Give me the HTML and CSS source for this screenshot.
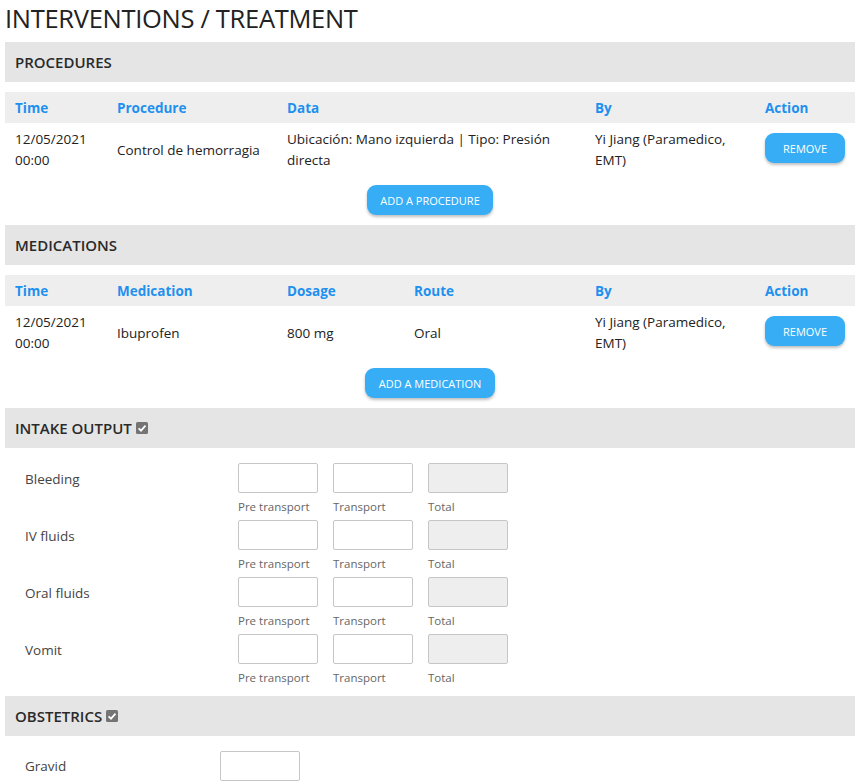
FILE: index.html
```html
<!DOCTYPE html>
<html>
<head>
<meta charset="utf-8">
<link rel="stylesheet" href="styles.css">
</head>
<body>
<h1 class="title">INTERVENTIONS / TREATMENT</h1>

<div class="sec-head">PROCEDURES</div>
<table class="tbl">
  <colgroup><col class="c102"><col class="c170"><col class="c308"><col class="c170"><col class="c100"></colgroup>
  <thead><tr><th>Time</th><th>Procedure</th><th>Data</th><th>By</th><th>Action</th></tr></thead>
  <tbody><tr>
    <td>12/05/2021<br>00:00</td>
    <td>Control de hemorragia</td>
    <td>Ubicación: Mano izquierda | Tipo: Presión directa</td>
    <td>Yi Jiang (Paramedico, EMT)</td>
    <td><button class="btn btn-rm">REMOVE</button></td>
  </tr></tbody>
</table>
<div class="add-row"><button class="btn btn-add">ADD A PROCEDURE</button></div>

<div class="sec-head">MEDICATIONS</div>
<table class="tbl">
  <colgroup><col class="c102"><col class="c170"><col class="c127"><col class="c181"><col class="c170"><col class="c100"></colgroup>
  <thead><tr><th>Time</th><th>Medication</th><th>Dosage</th><th>Route</th><th>By</th><th>Action</th></tr></thead>
  <tbody><tr>
    <td>12/05/2021<br>00:00</td>
    <td>Ibuprofen</td>
    <td>800 mg</td>
    <td>Oral</td>
    <td>Yi Jiang (Paramedico, EMT)</td>
    <td><button class="btn btn-rm">REMOVE</button></td>
  </tr></tbody>
</table>
<div class="add-row"><button class="btn btn-add btn-add-med">ADD A MEDICATION</button></div>

<div class="sec-head">INTAKE OUTPUT <span class="chk"><svg viewBox="0 0 12 12" width="12" height="12"><rect width="12" height="12" rx="1.5" fill="#747474"/><path d="M2.6 6.3 L5 8.6 L9.5 3.6" stroke="#fff" stroke-width="1.8" fill="none"/></svg></span></div>
<div class="io">
  <div class="io-row">
    <div class="io-label">Bleeding</div>
    <div class="io-field"><input class="inp" type="text"><span class="cap">Pre transport</span></div>
    <div class="io-field"><input class="inp" type="text"><span class="cap">Transport</span></div>
    <div class="io-field"><input class="inp inp-dis" type="text" disabled><span class="cap">Total</span></div>
  </div>
  <div class="io-row">
    <div class="io-label">IV fluids</div>
    <div class="io-field"><input class="inp" type="text"><span class="cap">Pre transport</span></div>
    <div class="io-field"><input class="inp" type="text"><span class="cap">Transport</span></div>
    <div class="io-field"><input class="inp inp-dis" type="text" disabled><span class="cap">Total</span></div>
  </div>
  <div class="io-row">
    <div class="io-label">Oral fluids</div>
    <div class="io-field"><input class="inp" type="text"><span class="cap">Pre transport</span></div>
    <div class="io-field"><input class="inp" type="text"><span class="cap">Transport</span></div>
    <div class="io-field"><input class="inp inp-dis" type="text" disabled><span class="cap">Total</span></div>
  </div>
  <div class="io-row">
    <div class="io-label">Vomit</div>
    <div class="io-field"><input class="inp" type="text"><span class="cap">Pre transport</span></div>
    <div class="io-field"><input class="inp" type="text"><span class="cap">Transport</span></div>
    <div class="io-field"><input class="inp inp-dis" type="text" disabled><span class="cap">Total</span></div>
  </div>
</div>

<div class="sec-head">OBSTETRICS <span class="chk"><svg viewBox="0 0 12 12" width="12" height="12"><rect width="12" height="12" rx="1.5" fill="#747474"/><path d="M2.6 6.3 L5 8.6 L9.5 3.6" stroke="#fff" stroke-width="1.8" fill="none"/></svg></span></div>
<div class="ob">
  <div class="ob-row">
    <div class="ob-label">Gravid</div>
    <input class="inp" type="text">
  </div>
</div>
</body>
</html>
```
FILE: styles.css
```css
* { box-sizing: border-box; }
body {
  margin: 0;
  padding: 0 10px 0 5px;
  font-family: "Open Sans", "Noto Sans", sans-serif;
  color: #222;
  background: #fff;
}
.title {
  margin: 0;
  height: 42px;
  line-height: 36px;
  font-size: 25.5px;
  font-weight: 400;
  color: #222;
  letter-spacing: -0.3px;
}
.sec-head {
  height: 40px;
  background: #e5e5e5;
  padding: 0 10px;
  display: flex;
  align-items: center;
  font-size: 15px;
  font-weight: 600;
  color: #2a2a2a;
  gap: 4px;
}
.chk { display: inline-flex; }
.tbl {
  width: 100%;
  border-collapse: collapse;
  table-layout: fixed;
  margin-top: 10px;
  font-size: 13.5px;
}
.c102 { width: 102px; }
.c170 { width: 170px; }
.c308 { width: 308px; }
.c127 { width: 127px; }
.c181 { width: 181px; }
.c100 { width: 100px; }
.tbl th {
  background: #eeeeee;
  color: #1e90ee;
  font-weight: 700;
  text-align: left;
  height: 31px;
  padding: 0 10px;
  font-size: 13.5px;
}
.tbl td {
  padding: 6px 10px 4px 10px;
  line-height: 21px;
  vertical-align: middle;
  color: #222;
}
.btn {
  border: 0;
  background: #36adf5;
  color: #fff;
  font-family: "Open Sans", sans-serif;
  font-size: 11px;
  border-radius: 9px;
  height: 30px;
  box-shadow: 0 2px 3px rgba(0,0,0,0.25);
  cursor: pointer;
  padding: 0;
}
.btn-rm { width: 80px; display: block; margin: -2px 0 2px 0; }
.add-row {
  display: flex;
  justify-content: center;
  padding: 10px 0 10px 0;
}
.btn-add { width: 126px; }
.btn-add-med { width: 130px; }
.io { padding: 15px 0 5px 20px; }
.io-row {
  display: flex;
  align-items: flex-start;
  height: 57px;
}
.io-label {
  width: 213px;
  font-size: 13.5px;
  color: #444;
  line-height: 32px;
}
.io-field {
  width: 95px;
  display: flex;
  flex-direction: column;
}
.inp {
  width: 80px;
  height: 30px;
  border: 1px solid #c6c6c6;
  border-radius: 2px;
  background: #fff;
  margin: 0;
  padding: 0 4px;
}
.inp-dis { background: #eeeeee; }
.cap {
  font-size: 11.5px;
  color: #666;
  line-height: 15px;
  margin-top: 6px;
}
.ob { padding: 15px 0 0 20px; }
.ob-row { display: flex; align-items: center; }
.ob-label {
  width: 195px;
  font-size: 13.5px;
  color: #444;
}
```
